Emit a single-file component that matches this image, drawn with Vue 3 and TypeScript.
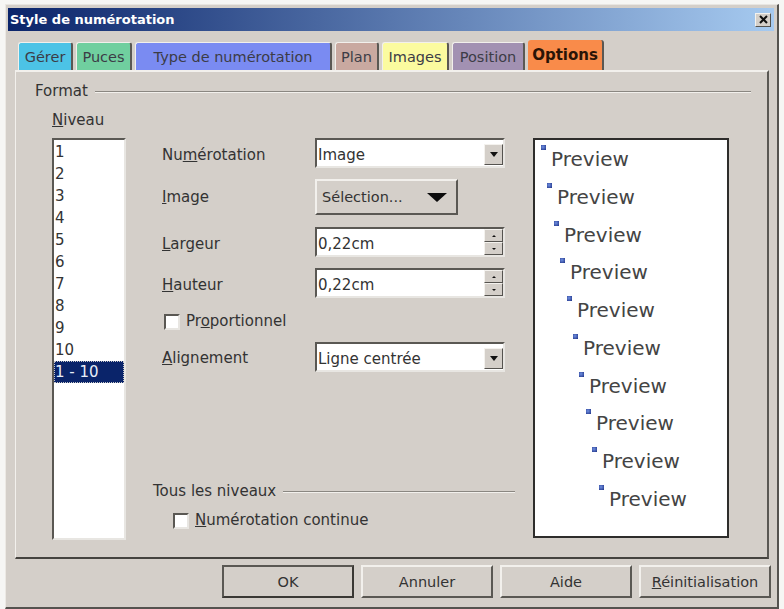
<script setup lang="ts">
const tabs = [
  { label: 'Gérer', width: 55, color: '#4cc3e6' },
  { label: 'Puces', width: 56, color: '#70cf9f' },
  { label: 'Type de numérotation', width: 197, color: '#7a8bf2' },
  { label: 'Plan', width: 44, color: '#c9a9a0' },
  { label: 'Images', width: 67, color: '#fbfb9f' },
  { label: 'Position', width: 73, color: '#a291b2' },
  { label: 'Options', width: 76, color: '#f98b4a', active: true },
]
const levels = ['1', '2', '3', '4', '5', '6', '7', '8', '9', '10']
const previews = levels.map((_, i) => Math.round(i * 6.4))
</script>

<template>
  <div class="window">
    <header class="titlebar">
      <span class="title">Style de numérotation</span>
      <span class="close">
        <svg width="9" height="9" viewBox="0 0 9 9"><path d="M1 1l7 7M8 1L1 8" stroke="#111" stroke-width="2" fill="none" /></svg>
      </span>
    </header>

    <nav class="tabs">
      <span
        v-for="t in tabs"
        :key="t.label"
        class="tab"
        :class="{ active: t.active }"
        :style="{ width: t.width + 'px', background: t.color }"
      >{{ t.label }}</span>
    </nav>

    <section class="panel">
      <div class="legend format"><span>Format</span><i></i></div>
      <div class="content">
        <div class="level-col">
          <div class="niveau"><u>N</u>iveau</div>
          <div class="listbox">
            <div v-for="l in levels" :key="l" class="opt">{{ l }}</div>
            <div class="opt sel">1 - 10</div>
          </div>
        </div>

        <div class="form-col">
          <div class="form">
            <label>Nu<u>m</u>érotation</label>
            <div class="field combo"><span>Image</span><b class="drop"><em class="tri"></em></b></div>

            <label class="flush"><u>I</u>mage</label>
            <button class="select-btn"><span>Sélection...</span><em class="big-tri"></em></button>

            <label><u>L</u>argeur</label>
            <div class="field combo"><span>0,22cm</span><b class="spin"><s><em class="up"></em></s><s><em class="tri small"></em></s></b></div>

            <label><u>H</u>auteur</label>
            <div class="field combo"><span>0,22cm</span><b class="spin"><s><em class="up"></em></s><s><em class="tri small"></em></s></b></div>

            <div class="check-row"><span class="check"></span><span>Pr<u>o</u>portionnel</span></div>

            <label class="last"><u>A</u>lignement</label>
            <div class="field combo last"><span>Ligne centrée</span><b class="drop"><em class="tri"></em></b></div>
          </div>

          <div class="all-levels">
            <div class="legend"><span>Tous les niveaux</span><i></i></div>
            <div class="check-row continuous"><span class="check"></span><span><u>N</u>umérotation continue</span></div>
          </div>
        </div>

        <div class="preview">
          <div v-for="(p, i) in previews" :key="i" class="pv" :style="{ paddingLeft: p + 'px' }">
            <em class="bullet"></em><span>Preview</span>
          </div>
        </div>
      </div>
    </section>

    <footer class="actions">
      <button class="btn default">OK</button>
      <button class="btn">Annuler</button>
      <button class="btn">Aide</button>
      <button class="btn"><u>R</u>éinitialisation</button>
    </footer>
  </div>
</template>

<style>
html, body { margin: 0; background: #f6f6f4; }
</style>

<style scoped>
.window {
  box-sizing: border-box;
  width: 774px;
  height: 605px;
  margin: 4px 0 0 5px;
  padding: 3px 6px 0 2px;
  background: #d4cfc9;
  border-top: 1px solid #e8e6e2;
  border-left: 1px solid #ece9e4;
  border-right: 2px solid #55534f;
  border-bottom: 2px solid #55534f;
  font-family: "DejaVu Sans", sans-serif;
  font-size: 15px;
  color: #333;
  overflow: hidden;
}
.titlebar {
  height: 23px;
  margin-right: -3px;
  padding: 0 3px 0 2px;
  display: flex;
  align-items: center;
  justify-content: space-between;
  background: linear-gradient(90deg, #0a246a, #a6caf0);
}
.title { font-size: 13px; font-weight: 700; color: #fff; }
.close {
  width: 16px; height: 14px;
  display: flex; align-items: center; justify-content: center;
  background: #d4cfc9;
  border: 1px solid; border-color: #f4f2ee #55534f #55534f #f4f2ee;
  box-sizing: border-box;
}
.tabs {
  display: flex;
  gap: 3px;
  height: 29px;
  margin-top: 10px;
  padding-left: 10px;
  align-items: flex-end;
}
.tab {
  box-sizing: border-box;
  height: 28px;
  display: flex;
  align-items: center;
  justify-content: center;
  border-top: 1px solid #f2f0ec;
  border-left: 1px solid #f2f0ec;
  border-right: 2px solid #5a5853;
  border-radius: 3px 3px 0 0;
  color: #3c3c46;
  font-size: 14.5px;
  white-space: nowrap;
}
.tab.active {
  height: 30px;
  border-top: 0;
  border-left: 0;
  font-weight: 700;
  font-size: 15px;
  color: #2a1406;
}
.panel {
  box-sizing: border-box;
  width: 754px;
  height: 489px;
  margin-left: 7px;
  border-top: 2px solid #f2f0ec;
  border-left: 1px solid #f2f0ec;
  border-right: 2px solid #5a5853;
  border-bottom: 2px solid #45433f;
  padding: 11px 0 0 19px;
}
.legend { display: flex; align-items: center; gap: 7px; line-height: 17px; }
.legend i { flex: 1; height: 1px; background: #8a8781; border-bottom: 1px solid #f2f0ec; }
.format { width: 716px; }
.content { display: flex; margin-top: 9px; }
.level-col { width: 108px; padding-left: 17px; box-sizing: border-box; flex: none; }
.niveau { line-height: 17px; margin-top: 3px; }
.listbox {
  box-sizing: border-box;
  width: 74px;
  height: 402px;
  margin-top: 9px;
  background: #fff;
  border: 2px solid; border-color: #5a5853 #e8e6e2 #e8e6e2 #5a5853;
  padding-top: 1px;
  line-height: 22px;
}
.opt { height: 22px; padding-left: 1px; }
.sel { background: #0a246a; color: #e8edf8; outline: 1px dotted #c9c9c9; outline-offset: -1px; width: 69px; }
.form-col {
  width: 381px;
  flex: none;
  display: flex;
  flex-direction: column;
  padding-top: 29px;
  padding-bottom: 11px;
  box-sizing: border-box;
}
.form {
  display: grid;
  grid-template-columns: 153px 190px;
  grid-template-rows: 30px 37px 30px 30px 21px 31px;
  row-gap: 11px;
  align-items: center;
  padding-left: 19px;
}
label { line-height: 17px; white-space: nowrap; padding-top: 4px; }
label.flush { padding-top: 0; }
.field {
  box-sizing: border-box;
  height: 30px;
  background: #fff;
  border: 2px solid; border-color: #5a5853 #e8e6e2 #e8e6e2 #5a5853;
  display: flex;
  align-items: stretch;
  justify-content: space-between;
  padding-left: 1px;
  line-height: 26px;
}
.field > span { padding-top: 2px; }
.field.last { align-self: end; }
.drop {
  width: 19px; height: 21px; margin-top: 4px;
  box-sizing: border-box;
  background: #d4cfc9;
  border: 1px solid; border-color: #f4f2ee #55534f #55534f #f4f2ee;
  display: flex; align-items: center; justify-content: center;
}
.spin { width: 19px; display: flex; flex-direction: column; justify-content: space-between; }
.spin s {
  flex: 1; text-decoration: none;
  box-sizing: border-box;
  background: #d4cfc9;
  border: 1px solid; border-color: #f4f2ee #55534f #55534f #f4f2ee;
  display: flex; align-items: center; justify-content: center;
}
.tri { width: 0; height: 0; border: 4px solid transparent; border-top: 5px solid #111; border-bottom: 0; }
.tri.small { border-width: 2px 2px 0; }
.up { width: 0; height: 0; border: 2px solid transparent; border-bottom: 2px solid #111; border-top: 0; }
.select-btn {
  box-sizing: border-box;
  width: 143px;
  height: 36px;
  font: inherit;
  font-size: 14.5px;
  color: inherit;
  padding: 0 8px 0 5px;
  align-self: start;
  display: flex;
  align-items: center;
  justify-content: space-between;
  background: #d4cfc9;
  border: 2px solid; border-color: #f2f0ec #5a5853 #5a5853 #f2f0ec;
}
.big-tri { width: 0; height: 0; border: 10px solid transparent; border-top: 9px solid #0c0c0c; border-bottom: 0; margin-right: 1px; }
.check-row { display: flex; align-items: center; gap: 6px; line-height: 17px; white-space: nowrap; }
.form .check-row { grid-column: 1 / 3; margin-left: 2px; align-self: end; }
.check {
  box-sizing: border-box;
  width: 16px; height: 16px;
  background: #fff;
  border: 2px solid; border-color: #5a5853 #e8e6e2 #e8e6e2 #5a5853;
  flex: none;
}
.all-levels { margin-top: auto; padding: 0 9px 0 10px; }
.all-levels .legend { position: relative; top: 1px; }
.continuous { margin: 13px 0 0 20px; }
.preview {
  box-sizing: border-box;
  width: 196px;
  height: 400px;
  margin-top: 29px;
  margin-left: 9px;
  background: #fff;
  border: 2px solid #2e2d2b;
  padding: 5px 0 0 6px;
  flex: none;
  display: flex;
  flex-direction: column;
}
.pv { height: 37.75px; display: flex; align-items: flex-start; font-size: 20px; line-height: 26px; color: #444; }
.pv span { margin: 1px 0 0 5px; }
.bullet { width: 5px; height: 5px; background: radial-gradient(circle at 40% 40%, #6f8fe0, #1c2f84); flex: none; }
.actions {
  display: flex;
  gap: 7px;
  padding: 6px 0 0 214px;
}
.btn {
  box-sizing: border-box;
  width: 132px;
  height: 33px;
  font: inherit;
  font-size: 14.5px;
  color: #333;
  padding: 0;
  background: #d4cfc9;
  border: 2px solid; border-color: #f2f0ec #5a5853 #5a5853 #f2f0ec;
  white-space: nowrap;
}
.btn.default { border-color: #5a5853 #3a3834 #3a3834 #5a5853; }
</style>
